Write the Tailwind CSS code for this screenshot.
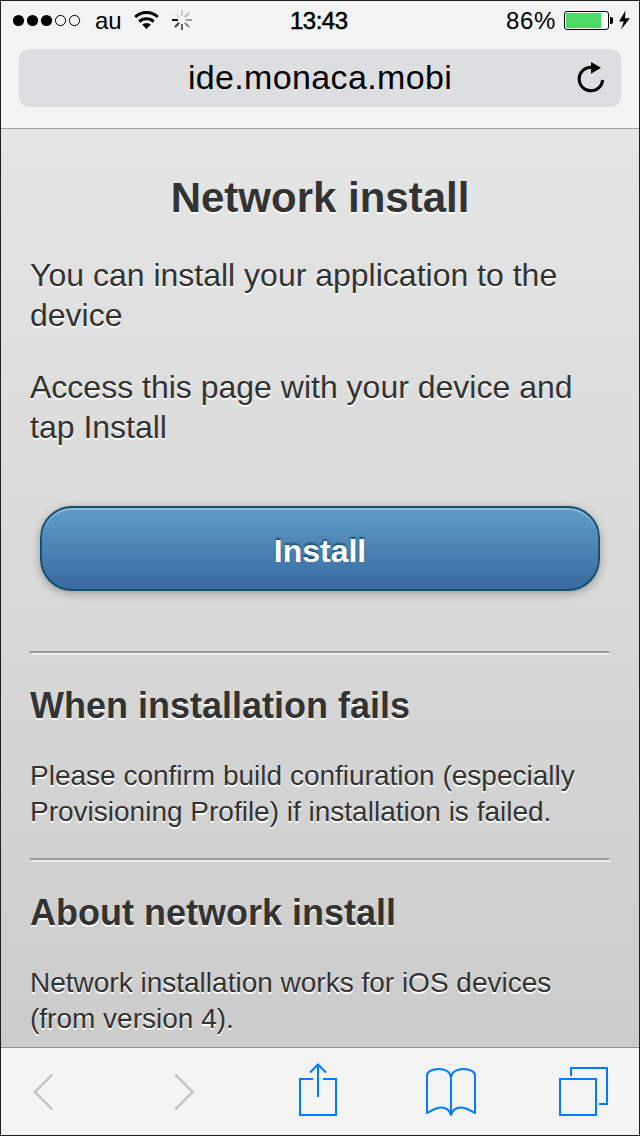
<!DOCTYPE html>
<html lang="en">
<head>
<meta charset="utf-8">
<title>Network install</title>
<script src="https://cdn.jsdelivr.net/npm/@tailwindcss/browser@4"></script>
</head>
<body>
<div class="w-[640px] h-[1136px] flex flex-col border border-[#231f20] bg-[#f3f3f3] overflow-hidden font-['Liberation_Sans',Arial,sans-serif] text-black">
  <header class="h-[128px] shrink-0 flex flex-col border-b border-[#a0a0a2]">
    <div class="h-[48px] flex relative">
      <svg class="w-[200px] h-[40px] shrink-0" viewBox="1 1 200 40" fill="none">
        <g fill="#000"><circle cx="18.5" cy="20.5" r="5.6"/><circle cx="32.5" cy="20.5" r="5.6"/><circle cx="46.5" cy="20.5" r="5.6"/></g>
        <g stroke="#000" stroke-width="1"><circle cx="60.5" cy="20.5" r="5.1"/><circle cx="74.5" cy="20.5" r="5.1"/></g>
        <path d="M135.200 17a16.500 16.500 0 0 1 22.600 0" stroke="#000" stroke-width="3"/>
        <path d="M139.300 21.600a10.600 10.600 0 0 1 14.400 0" stroke="#000" stroke-width="3"/>
        <path d="M146.500 29l-4.400-4.400a6.500 6.500 0 0 1 8.800 0z" fill="#000"/>
        <g stroke-width="1.9">
          <path d="M182 16v-6" stroke="#c8c8c8"/><path d="M184.900 17.100l4.200-4.200" stroke="#b5b5b5"/><path d="M186 20h6" stroke="#999"/><path d="M184.900 22.900l4.200 4.200" stroke="#7d7d7d"/><path d="M182 24v6" stroke="#595959"/><path d="M179.100 22.900l-4.200 4.200" stroke="#333"/><path d="M178 20h-6" stroke="#050505"/><path d="M179.100 17.100l-4.200-4.200" stroke="#dedede"/>
        </g>
      </svg>
      <span class="absolute left-[94px] top-[6px] text-[24px] leading-[28px]">au</span>
      <span class="absolute left-[289px] top-[6px] text-[24px] leading-[28px] [-webkit-text-stroke:0.5px_#000] tracking-[-0.5px]">13:43</span>
      <span class="absolute left-[505px] top-[6px] text-[24px] leading-[28px] tracking-[0.6px]">86%</span>
      <svg class="absolute left-[559px] top-[4px] w-[76px] h-[32px]" viewBox="560 5 76 32">
        <rect x="564.5" y="11.500" width="44" height="18" rx="2.5" fill="#fff" stroke="#000"/>
        <path d="M566 13h35v15h-35z" fill="#4cd964"/>
        <path d="M610 17h1a2 2 0 0 1 2 2v3a2 2 0 0 1-2 2h-1z"/>
        <path d="M625.500 10.500L619 21.500h4.800L621 29.500l9-11.300h-5z"/>
      </svg>
    </div>
    <div class="mx-[18px] h-[58px] rounded-[10px] bg-[#dddee0] flex items-center justify-center relative">
      <span class="text-[34px] leading-[40px] tracking-[0.35px] -mt-[2px]">ide.monaca.mobi</span>
      <svg class="absolute left-[555px] top-[9px] w-[34px] h-[38px]" viewBox="574 58 34 38">
        <path d="M591 67.200a11.800 11.800 0 1 0 11.700 12.800" fill="none" stroke="#000" stroke-width="3"/>
        <path d="M591 62l10 5.800-10 6z"/>
      </svg>
    </div>
  </header>
  <main class="flex-1 min-h-0 overflow-hidden px-[29px] pt-[44px] bg-linear-to-b from-[#e5e5e5] to-[#cccccc] text-[#333] [text-shadow:0_2px_0_#fff]">
    <h1 class="text-[42px] leading-[50px] font-bold text-center">Network install</h1>
    <p class="mt-[32px] text-[32px] leading-[40px]">You can install your application to the<br>device</p>
    <p class="mt-[32px] text-[32px] leading-[40px]">Access this page with your device and<br>tap Install</p>
    <button class="block mt-[59px] mx-[10px] w-[560px] h-[85px] rounded-[32px] border-2 border-[#145072] bg-linear-to-b from-[#5f9cc8] to-[#396b9f] text-white text-[32px] leading-[40px] font-bold pt-[5px] [text-shadow:0_-2px_2px_#145072] shadow-[0_2px_8px_rgba(0,0,0,0.3),inset_0_2px_0_rgba(255,255,255,0.3)]">Install</button>
    <hr class="mt-[60px] h-[4px] border-t-2 border-b-2 border-l border-r border-t-[#9a9a9a] border-l-[#9a9a9a] border-r-[#eeeeee] border-b-[#eeeeee]">
    <h2 class="mt-[29px] text-[36px] leading-[44px] font-bold">When installation fails</h2>
    <p class="mt-[30px] text-[28px] leading-[36px]">Please confirm build confiuration (especially<br>Provisioning Profile) if installation is failed.</p>
    <hr class="mt-[28px] h-[4px] border-t-2 border-b-2 border-l border-r border-t-[#9a9a9a] border-l-[#9a9a9a] border-r-[#eeeeee] border-b-[#eeeeee]">
    <h2 class="mt-[29px] text-[36px] leading-[44px] font-bold">About network install</h2>
    <p class="mt-[30px] text-[28px] leading-[36px]">Network installation works for iOS devices<br>(from version 4).</p>
  </main>
  <footer class="h-[88px] shrink-0 border-t border-[#8e8e8e]">
    <svg class="w-[638px] h-[87px]" viewBox="1 1048 638 87" fill="none" stroke="#007aff" stroke-width="2">
      <g stroke="#c2c2c2" stroke-width="2.4"><path d="M52.300 1074.500L35 1092l17.300 17.500"/><path d="M175.200 1074.500L192.500 1092l-17.300 17.500"/></g>
      <path d="M313 1079h-13v36h36v-36h-13M318 1097v-32M310 1072.500l8-8 8 8"/>
      <path stroke-linejoin="round" d="M451 1077C450 1071.500 444.500 1069 438.500 1069S427.500 1071.500 427 1075v38C431 1111 436 1107.500 441 1107.500S449.500 1110 451 1115C452.500 1110 456 1107.500 461 1107.500S471 1111 475 1113v-38C474.500 1071.500 469.500 1069 463.500 1069S452 1071.500 451 1077V1115"/>
      <path d="M560 1079h36v36h-36zM571 1076v-8h36v36h-8"/>
    </svg>
  </footer>
</div>
</body>
</html>
